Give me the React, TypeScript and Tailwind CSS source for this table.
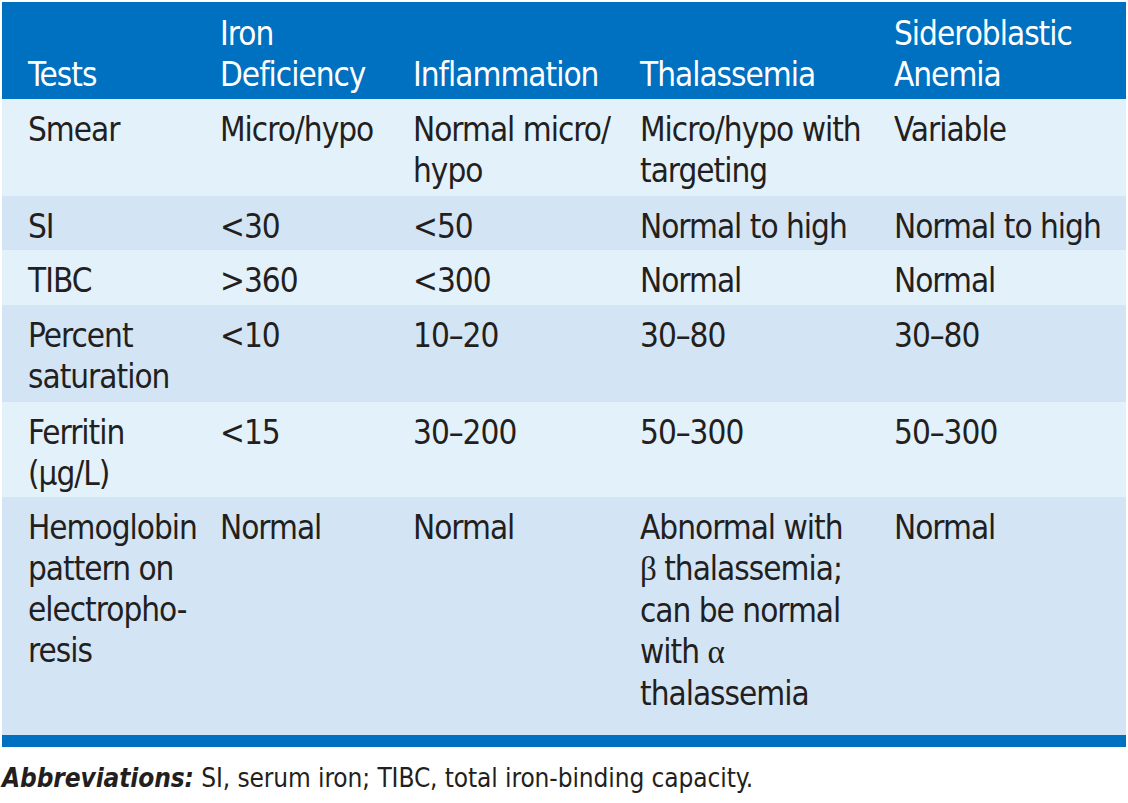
import React from "react";

const font = { fontFamily: '"Liberation Sans Narrow", "DejaVu Sans Condensed", "Liberation Sans", sans-serif' };

const G = ({ c }: { c: string }) => (
  <span style={{ fontFamily: '"Liberation Serif", serif' }}>{c}</span>
);

type Row = { cells: React.ReactNode[]; bg: string; h: string };

const rows: Row[] = [
  { bg: "bg-[#e3f1fb]", h: "h-[97px]", cells: ["Smear", "Micro/hypo", <>Normal micro/<br />hypo</>, <>Micro/hypo with<br />targeting</>, "Variable"] },
  { bg: "bg-[#d3e5f5]", h: "h-[54px]", cells: ["SI", "<30", "<50", "Normal to high", "Normal to high"] },
  { bg: "bg-[#e3f1fb]", h: "h-[55px]", cells: ["TIBC", ">360", "<300", "Normal", "Normal"] },
  { bg: "bg-[#d3e5f5]", h: "h-[97px]", cells: [<>Percent<br />saturation</>, "<10", "10–20", "30–80", "30–80"] },
  { bg: "bg-[#e3f1fb]", h: "h-[95px]", cells: [<>Ferritin<br />(µg/L)</>, "<15", "30–200", "50–300", "50–300"] },
  {
    bg: "bg-[#d3e5f5]",
    h: "h-[238px]",
    cells: [
      <>Hemoglobin<br />pattern on<br />electropho-<br />resis</>,
      "Normal",
      "Normal",
      <>Abnormal with<br /><G c="β" /> thalassemia;<br />can be normal<br />with <G c="α" /><br />thalassemia</>,
      "Normal",
    ],
  },
];

const widths = ["w-[192px]", "w-[193px]", "w-[227px]", "w-[254px]", "w-[258px]"];

export default function App() {
  return (
    <div className="bg-white w-[1128px] h-[803px] pt-[2px] pl-[2px]" style={font}>
      <table className="w-[1124px] table-fixed border-collapse">
        <colgroup>
          {widths.map((w, i) => (
            <col key={i} className={w} />
          ))}
        </colgroup>
        <thead>
          <tr className="bg-[#0070c0] h-[97px]">
            {["Tests", <>Iron<br />Deficiency</>, "Inflammation", "Thalassemia", <>Sideroblastic<br />Anemia</>].map((c, i) => (
              <th
                key={i}
                className="text-left align-bottom font-normal text-white text-[33px] leading-[41px] tracking-[-1px] pl-[26px] pb-[4px] whitespace-nowrap"
              >
                {c}
              </th>
            ))}
          </tr>
        </thead>
        <tbody>
          {rows.map((r, ri) => (
            <tr key={ri} className={`${r.bg} ${r.h}`}>
              {r.cells.map((c, ci) => (
                <td
                  key={ci}
                  className="align-top text-[#231f20] text-[33px] leading-[41px] tracking-[-1px] pl-[26px] pt-[10px] whitespace-nowrap"
                >
                  {c}
                </td>
              ))}
            </tr>
          ))}
        </tbody>
      </table>
      <div className="w-[1124px] h-[12px] bg-[#0070c0]" />
      <div className="mt-[15px] text-[26px] leading-[32px] tracking-[-0.1px] text-[#231f20] whitespace-nowrap">
        <span className="font-bold italic">Abbreviations:</span> SI, serum iron; TIBC, total iron-binding capacity.
      </div>
    </div>
  );
}
